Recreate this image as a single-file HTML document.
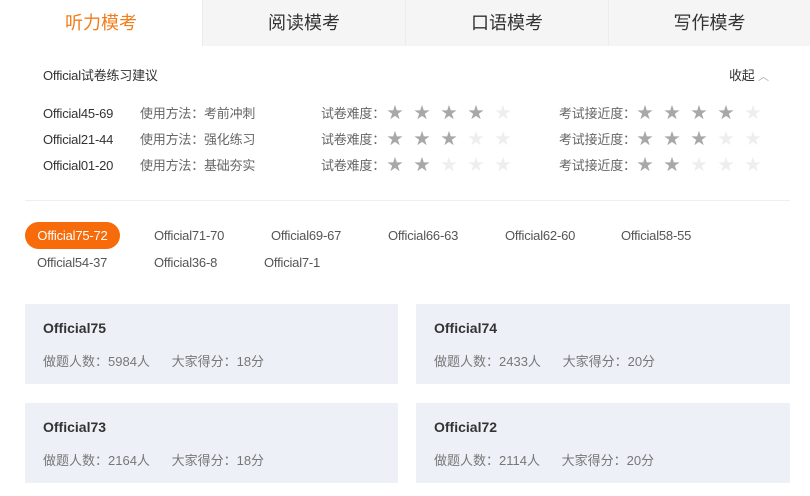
<!DOCTYPE html>
<html><head><meta charset="utf-8"><style>
*{margin:0;padding:0;box-sizing:border-box}
body{width:810px;height:496px;background:#fff;font-family:"Liberation Sans","Noto Sans CJK SC",sans-serif;position:relative;overflow:hidden;color:#333}
.a{position:absolute;white-space:nowrap}
.tab{position:absolute;top:0;height:46px;width:203px;background:#f5f5f5;border-left:1px solid #ececec;font-size:18px;color:#333;text-align:center;line-height:46px}
.s{font-size:13px;line-height:16px;letter-spacing:-0.2px}
.st{position:absolute;font-size:16px;line-height:16px}
.pill{position:absolute;font-size:13px;color:#555;line-height:16px;letter-spacing:-0.2px}
.card{position:absolute;background:#edf1f7;width:373px;height:80px}
.card b{position:absolute;left:18px;top:16px;font-size:14px;color:#333}
.card span{position:absolute;left:18px;top:47px;font-size:13px;color:#777;white-space:pre}
</style></head><body>
<div class="tab" style="left:0;width:202px;background:#fff;border:none;color:#f07d1c">听力模考</div>
<div class="tab" style="left:202px">阅读模考</div>
<div class="tab" style="left:405px">口语模考</div>
<div class="tab" style="left:608px;width:202px">写作模考</div>

<div class="a s" style="left:43px;top:68px;color:#333">Official试卷练习建议</div>
<div class="a s" style="left:729px;top:68px;color:#333">收起 <span style="color:#aaa;font-size:11px">︿</span></div>

<div class="a s" style="left:43px;top:106px">Official45-69</div>
<div class="a s" style="left:140px;top:106px;color:#666">使用方法：考前冲刺</div>
<div class="a s" style="left:43px;top:132px">Official21-44</div>
<div class="a s" style="left:140px;top:132px;color:#666">使用方法：强化练习</div>
<div class="a s" style="left:43px;top:158px">Official01-20</div>
<div class="a s" style="left:140px;top:158px;color:#666">使用方法：基础夯实</div>
<div class="a s" style="left:321px;top:106px;color:#666">试卷难度：</div>
<div class="a s" style="left:321px;top:132px;color:#666">试卷难度：</div>
<div class="a s" style="left:321px;top:158px;color:#666">试卷难度：</div>
<div class="a s" style="left:559px;top:106px;color:#666">考试接近度：</div>
<div class="a s" style="left:559px;top:132px;color:#666">考试接近度：</div>
<div class="a s" style="left:559px;top:158px;color:#666">考试接近度：</div>
<div id="stars"></div>
<script>
var rows=[[106,4],[132,3],[158,2]],h='';
rows.forEach(function(r){[387,637].forEach(function(x0){for(var i=0;i<5;i++){h+='<div class="st" style="left:'+(x0+i*27)+'px;top:'+r[0]+'px;color:'+(i<r[1]?'#a8a8a8':'#eee')+'">★</div>';}});});
document.getElementById('stars').innerHTML=h;
</script>
<div class="a" style="left:25px;top:200px;width:765px;height:1px;background:#eee"></div>

<div class="a" style="left:25px;top:222px;width:95px;height:27px;border-radius:14px;background:#f76b0a;color:#fff;font-size:13px;line-height:27px;text-align:center;letter-spacing:-0.2px">Official75-72</div>
<div class="pill" style="left:154px;top:228px">Official71-70</div>
<div class="pill" style="left:271px;top:228px">Official69-67</div>
<div class="pill" style="left:388px;top:228px">Official66-63</div>
<div class="pill" style="left:505px;top:228px">Official62-60</div>
<div class="pill" style="left:621px;top:228px">Official58-55</div>
<div class="pill" style="left:37px;top:255px">Official54-37</div>
<div class="pill" style="left:154px;top:255px">Official36-8</div>
<div class="pill" style="left:264px;top:255px">Official7-1</div>

<div class="card" style="left:25px;top:304px"><b>Official75</b><span>做题人数：5984人      大家得分：18分</span></div>
<div class="card" style="left:416px;top:304px;width:374px"><b>Official74</b><span>做题人数：2433人      大家得分：20分</span></div>
<div class="card" style="left:25px;top:403px"><b>Official73</b><span>做题人数：2164人      大家得分：18分</span></div>
<div class="card" style="left:416px;top:403px;width:374px"><b>Official72</b><span>做题人数：2114人      大家得分：20分</span></div>
</body></html>
